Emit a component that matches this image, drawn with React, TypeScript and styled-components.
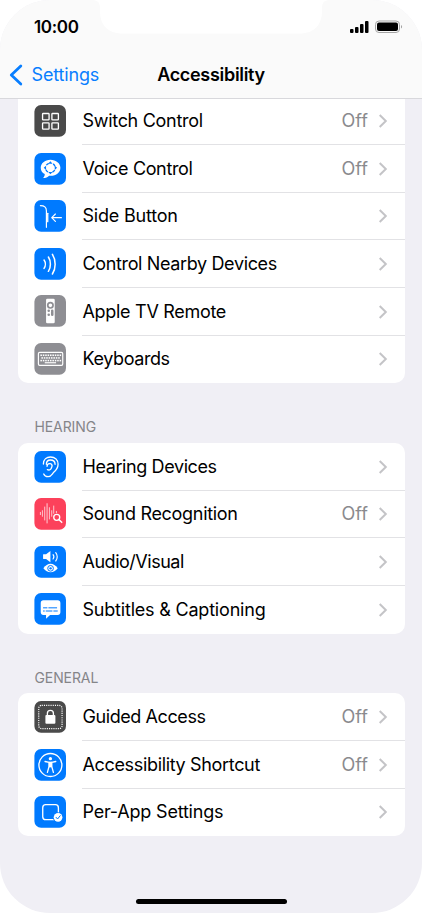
import React from 'react';
import styled, { createGlobalStyle } from 'styled-components';

const Global = createGlobalStyle`
  * { box-sizing: border-box; }
  body { margin: 0; background: #fff; font-family: Inter, 'Liberation Sans', sans-serif; color: #000; }
`;

const Screen = styled.div`
  width: 422px;
  height: 913px;
  border-radius: 50px;
  overflow: hidden;
  background: #f0eff5;
  display: flex;
  flex-direction: column;
  position: relative;
`;

const Header = styled.header`
  height: 99px;
  flex: none;
  background: #fafafa;
  border-bottom: 1px solid #d8d8dc;
  position: relative;
`;

const NotchShape = styled.svg`
  position: absolute;
  left: 92px;
  top: 0;
`;

const StatusBar = styled.div`
  height: 53px;
  display: flex;
  align-items: center;
  justify-content: space-between;
  padding: 0 19px 0 34px;
`;

const Clock = styled.span`
  font-size: 17px;
  font-weight: 600;
  letter-spacing: -0.35px;
`;

const NavBar = styled.div`
  height: 43px;
  display: grid;
  grid-template-columns: 1fr auto 1fr;
  align-items: center;
  padding: 0 9px;
`;

const Back = styled.div`
  display: flex;
  align-items: center;
  gap: 8.5px;
  color: #087eff;
  font-size: 18px;
  letter-spacing: -0.15px;
`;

const Title = styled.h1`
  margin: 0;
  font-size: 18px;
  font-weight: 600;
  letter-spacing: -0.3px;
`;

const List = styled.main`
  flex: 1;
  min-height: 0;
  overflow: hidden;
  padding: 0 17px 0 17.5px;
`;

const Card = styled.section<{ $scrolled?: boolean }>`
  background: #fff;
  border-radius: ${(p) => (p.$scrolled ? '0 0 10px 10px' : '10px')};
  margin-top: ${(p) => (p.$scrolled ? '-1.6px' : '0')};
`;

const GroupLabel = styled.h2`
  margin: 0;
  height: 59.8px;
  padding: 35px 0 0 17px;
  font-size: 14px;
  line-height: 17px;
  font-weight: 400;
  color: #858589;
  letter-spacing: -0.1px;
`;

const Row = styled.div`
  height: 47.65px;
  display: flex;
  padding-left: 16.8px;
  align-items: center;
`;

const Tile = styled.svg`
  width: 32px;
  height: 32px;
  flex: none;
  margin-right: 16.2px;
  margin-bottom: 0.6px;
`;

const RowBody = styled.div<{ $last: boolean }>`
  flex: 1;
  height: 100%;
  display: flex;
  align-items: center;
  padding-right: 17.5px;
  padding-bottom: 0.4px;
  border-bottom: 1px solid ${(p) => (p.$last ? 'transparent' : '#e2e2e5')};
`;

const Label = styled.span<{ $spacing: number }>`
  flex: 1;
  font-size: 18px;
  white-space: nowrap;
  letter-spacing: ${(p) => p.$spacing}px;
`;

const Value = styled.span`
  font-size: 18px;
  color: #8a8a8e;
  margin-right: 10.5px;
`;

const HomeBar = styled.div`
  position: absolute;
  left: 136px;
  bottom: 9px;
  width: 150.5px;
  height: 5.5px;
  border-radius: 3px;
  background: #000;
`;

const Chevron = () => (
  <svg width="9" height="15" viewBox="0 0 9 15" fill="none" stroke="#c4c4c7" strokeWidth="2">
    <path d="M0.700 2 6.800 8 0.700 14" />
  </svg>
);

const BLUE = '#007aff';
const DARK = '#4a4a4a';
const GRAY = '#8e8e93';

const stroke = { fill: 'none', stroke: '#fff', strokeLinecap: 'round' as const, strokeLinejoin: 'round' as const };

const keys = (y: number, start: number, n: number) =>
  Array.from({ length: n }, (_, i) => <rect key={`${y}-${i}`} x={start + i * 7.2} y={y} width="4.6" height="4.6" fill="#fff" />);

const glyphs: Record<string, React.ReactNode> = {
  switch: (
    <g {...stroke} strokeWidth="4">
      <rect x="24.500" y="25.500" width="19.500" height="19" rx="2" />
      <rect x="52.500" y="25.500" width="19.500" height="19" rx="2" />
      <rect x="24.500" y="53.500" width="19.500" height="19" rx="2" />
      <rect x="52.500" y="53.500" width="19.500" height="19" rx="2" />
    </g>
  ),
  voice: (
    <>
      <path d="M48 20C31 20 19 31 19 44c0 8 4 15 12 19 0 5-1 8-5 12 8 0 14-3 18-7 20 2 34-9 34-24 0-13-13-24-30-24Z" fill="#fff" />
      <g fill={BLUE}>
        <path d="m48 25 6.500 7h-13ZM48 64l-6.500-7h13ZM28 44.500l7-6.500v13ZM68 44.500l-7-6.500v13Z" />
        <circle cx="48" cy="44.500" r="14.500" fill="none" stroke={BLUE} strokeWidth="4" strokeDasharray="9 13.780" strokeDashoffset="-6.890" />
      </g>
    </>
  ),
  side: (
    <g {...stroke} strokeWidth="3.500">
      <path d="M18 17c11 0 18 4 18 15v50" />
      <path d="M40 40v25" strokeWidth="4" />
      <path d="M81 53H52M63 42 52 53l11 11" />
    </g>
  ),
  waves: (
    <g {...stroke} strokeWidth="4.500">
      <path d="M29 36c5 7 5 18 0 25M42 27c8 12 8 31 0 43M54 19c11 17 11 42 0 59" />
    </g>
  ),
  remote: (
    <>
      <rect x="35" y="11" width="26" height="74" rx="4" fill="#fff" />
      <circle cx="48" cy="31" r="8" fill="none" stroke={GRAY} strokeWidth="5" />
      <g fill={GRAY}>
        <circle cx="43" cy="47" r="3.800" />
        <circle cx="53.500" cy="47" r="3.800" />
        <circle cx="43" cy="59" r="3.800" />
        <rect x="49.700" y="47" width="7.600" height="16" rx="3.800" />
      </g>
    </>
  ),
  keyboard: (
    <>
      <rect x="12" y="28" width="73" height="39" rx="4" {...stroke} strokeWidth="3.500" />
      {keys(34.5, 18, 9)}
      {keys(42.5, 21, 8)}
      {keys(50.5, 18, 9)}
      <rect x="31" y="57.500" width="34" height="3.500" fill="#fff" />
    </>
  ),
  ear: (
    <g {...stroke} strokeWidth="4">
      <path d="M27 39C27 25 37 18 48 18c14 0 23 9 23 22 0 11-6 18-13 24-5 5-7 13-17 13-6 0-11-3-13-8" />
      <path d="M36 40c0-9 5-13 12-13 9 0 14 6 14 13" />
      <path d="M38 46c0-10 14-11 15-2 0 4-2 6-3 9-1 4-7 5-11 3" />
    </g>
  ),
  sound: (
    <>
      <g {...stroke} strokeWidth="3">
        <path d="M18 43v7M24 38v17M31 27v39M45 29v34M52 38v17M58 24v22M66 40v4" opacity=".7" />
        <path d="M38 17v58" opacity=".75" />
      </g>
      <circle cx="67" cy="58" r="9" {...stroke} strokeWidth="4" />
      <path d="m74 65 8 8" {...stroke} strokeWidth="4.500" />
    </>
  ),
  av: (
    <>
      <path d="M27 25h8l13-10v34L35 39h-8c-1 0-1-1-1-2V27c0-1 0-2 1-2Z" fill="#fff" />
      <path d="M56 26c3 4 3 9 0 13M64 20c6 7 6 18 0 25" {...stroke} strokeWidth="3.500" />
      <path d="M27 67c12-18 31-18 43 0-12 16-31 16-43 0Z" fill="#fff" />
      <circle cx="48.500" cy="67" r="8.500" fill="none" stroke={BLUE} strokeWidth="3" />
      <circle cx="48.500" cy="67" r="3.500" fill={BLUE} />
    </>
  ),
  subtitles: (
    <>
      <path d="M27 22h43c5 0 8 3 8 8v28c0 5-3 8-8 8H47L35 77V66h-8c-5 0-8-3-8-8V30c0-5 3-8 8-8Z" fill="#fff" />
      <path d="M26 44.500h13M42 44.500h26M26 54h5M34 54h20M57 54h13" stroke={BLUE} strokeWidth="3" />
    </>
  ),
  lock: (
    <>
      <rect x="13" y="13" width="70" height="70" rx="9" fill="none" stroke="#fff" strokeWidth="3.500" strokeDasharray="3.300 3.300" />
      <rect x="33" y="42" width="30" height="26" rx="3" fill="#fff" />
      <path d="M39 44v-7c0-12 18-12 18 0v7" {...stroke} strokeWidth="4" />
    </>
  ),
  person: (
    <>
      <circle cx="48" cy="48" r="34.500" {...stroke} strokeWidth="4" />
      <circle cx="48" cy="29" r="5" fill="#fff" />
      <path d="M32 37.500 44 40v12l-5 18M64 37.500 52 40v12l5 18" {...stroke} strokeWidth="4" />
      <path d="M43 38h10v17H43Z" fill="#fff" />
    </>
  ),
  perapp: (
    <>
      <rect x="25" y="26" width="47" height="45" rx="9" {...stroke} strokeWidth="4" />
      <circle cx="71" cy="64" r="15.500" fill={BLUE} />
      <circle cx="71" cy="64" r="13" fill="#fff" />
      <path d="m65 64 4.500 5 8-10" {...stroke} stroke={BLUE} strokeWidth="3" />
    </>
  ),
};

type Item = { icon: string; label: string; tile?: string; value?: string; spacing?: number };

const controls: Item[] = [
  { icon: 'switch', label: 'Switch Control', tile: DARK, value: 'Off', spacing: -0.3 },
  { icon: 'voice', label: 'Voice Control', value: 'Off', spacing: -0.35 },
  { icon: 'side', label: 'Side Button' },
  { icon: 'waves', label: 'Control Nearby Devices', spacing: -0.36 },
  { icon: 'remote', label: 'Apple TV Remote', tile: GRAY, spacing: -0.3 },
  { icon: 'keyboard', label: 'Keyboards', tile: GRAY, spacing: -0.4 },
];

const hearing: Item[] = [
  { icon: 'ear', label: 'Hearing Devices', spacing: -0.4 },
  { icon: 'sound', label: 'Sound Recognition', tile: '#fc415b', value: 'Off', spacing: -0.3 },
  { icon: 'av', label: 'Audio/Visual', spacing: -0.48 },
  { icon: 'subtitles', label: 'Subtitles & Captioning' },
];

const general: Item[] = [
  { icon: 'lock', label: 'Guided Access', tile: DARK, value: 'Off', spacing: -0.42 },
  { icon: 'person', label: 'Accessibility Shortcut', value: 'Off', spacing: -0.34 },
  { icon: 'perapp', label: 'Per-App Settings' },
];

const Rows = ({ items }: { items: Item[] }) => (
  <>
    {items.map((item, i) => (
      <Row key={item.label}>
        <Tile viewBox="-1.2 0 96 96">
          <rect width="94.800" height="95" rx="20" fill={item.tile ?? BLUE} />
          {glyphs[item.icon]}
        </Tile>
        <RowBody $last={i === items.length - 1}>
          <Label $spacing={item.spacing ?? -0.2}>{item.label}</Label>
          {item.value && <Value>{item.value}</Value>}
          <Chevron />
        </RowBody>
      </Row>
    ))}
  </>
);

export default function App() {
  return (
    <>
      <Global />
      <Screen>
        <Header>
          <NotchShape width="238" height="34" viewBox="0 0 238 34">
            <path d="M0 0h238c-5 0-8 2-8 8v3c0 14-8 22.500-22 22.500H30C16 33.500 8 25 8 11V8c0-6-3-8-8-8Z" fill="#fff" />
          </NotchShape>
          <StatusBar>
            <Clock>10:00</Clock>
            <svg width="54" height="14" viewBox="0 0 54 14">
              <rect x="1" y="9" width="3.500" height="4" rx="1" />
              <rect x="6" y="7" width="3.500" height="6" rx="1" />
              <rect x="11" y="4" width="3.500" height="9" rx="1" />
              <rect x="16" y="1" width="3.500" height="12" rx="1" />
              <rect x="26.500" y="1" width="24" height="11.500" rx="3.500" fill="none" stroke="#a5a5a5" />
              <rect x="28" y="2.500" width="21" height="8.500" rx="2" />
              <path d="M52 5c1.500.5 1.500 3 0 3.500Z" fill="#a5a5a5" />
            </svg>
          </StatusBar>
          <NavBar>
            <Back>
              <svg width="14" height="22" viewBox="0 0 14 22" fill="none" stroke="#087eff" strokeWidth="2.800" strokeLinecap="round" strokeLinejoin="round">
                <path d="M11.800 2 2.300 11l9.500 9" />
              </svg>
              Settings
            </Back>
            <Title>Accessibility</Title>
            <span />
          </NavBar>
        </Header>
        <List>
          <Card $scrolled>
            <Rows items={controls} />
          </Card>
          <GroupLabel>HEARING</GroupLabel>
          <Card>
            <Rows items={hearing} />
          </Card>
          <GroupLabel>GENERAL</GroupLabel>
          <Card>
            <Rows items={general} />
          </Card>
        </List>
        <HomeBar />
      </Screen>
    </>
  );
}
